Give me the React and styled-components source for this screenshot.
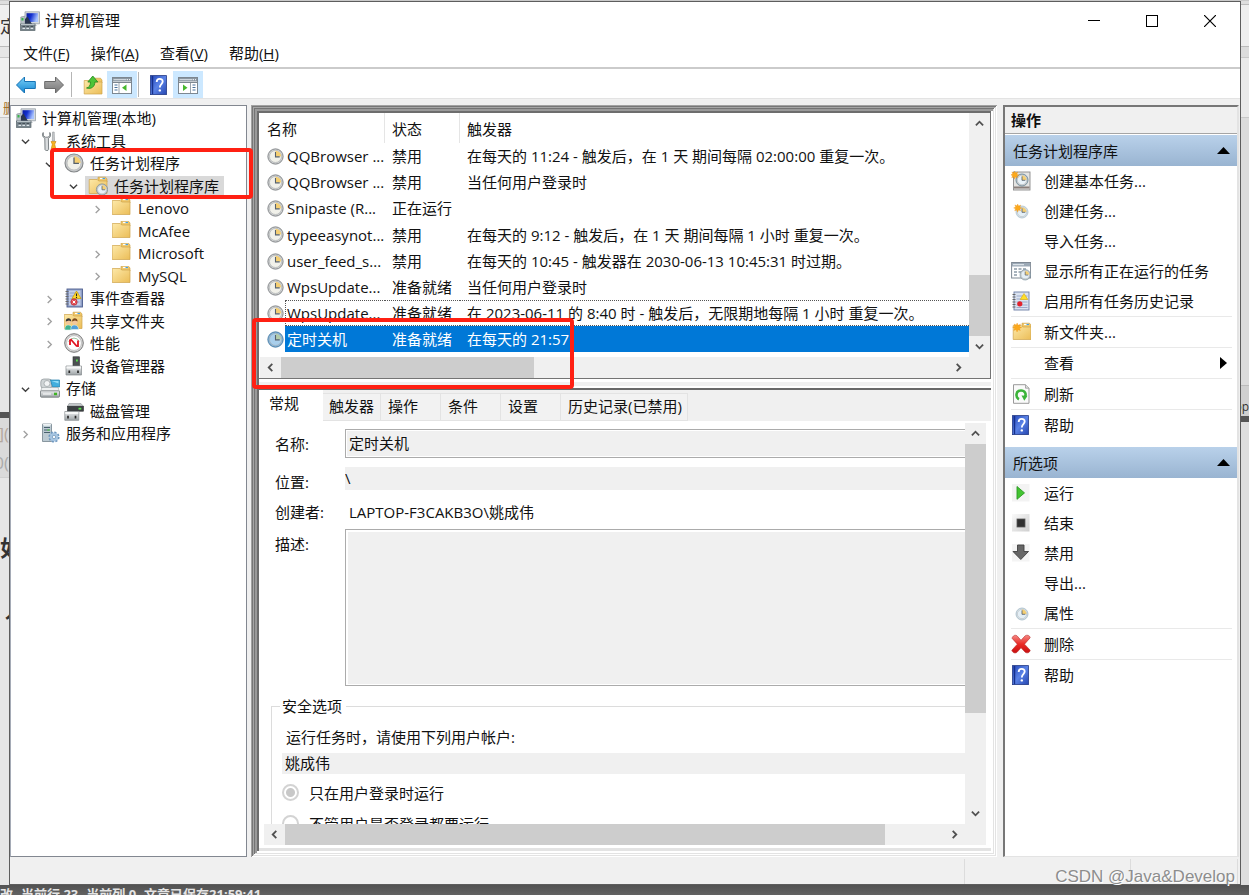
import React, { useState } from 'react';
import styled, { createGlobalStyle, css } from 'styled-components';

const GlobalStyle = createGlobalStyle`
  * {
    box-sizing: border-box;
  }

  body {
    margin: 0;
    overflow: hidden;
  }

  body, button, input, textarea {
    font-family: "Open Sans", "Noto Sans CJK SC", sans-serif;
    font-size: 15px;
    color: #111;
  }

  button {
    padding: 0;
    border: 0;
    background: none;
  }
`;

/* ---------- desktop ---------- */

const Desktop = styled.div`
  height: 100vh;
  display: grid;
  grid-template: minmax(0, 1fr) 10px / 9px minmax(0, 1fr) 8px;
  padding-top: 1px;
  background: #c9c9c9;
  overflow: hidden;
`;

const EdgeStrip = styled.div`
  display: flex;
  flex-direction: column;
  overflow: hidden;
  background: #e6e6e6;
`;

const EdgeBlock = styled.div`
  flex: ${(p) => (p.$height ? `0 0 ${p.$height}px` : '1')};
  display: flex;
  align-items: ${(p) => (p.$low ? 'flex-end' : 'center')};
  justify-content: ${(p) => (p.$start ? 'flex-start' : 'flex-end')};
  overflow: hidden;
  background: ${(p) => p.$bg || '#e6e6e6'};
  border-bottom: 1px solid ${(p) => p.$line || 'transparent'};
  padding-left: ${(p) => p.$inset || 0}px;
  color: ${(p) => p.$color || '#333'};
  font-size: ${(p) => p.$size || 15}px;
  font-weight: ${(p) => (p.$bold ? 700 : 400)};
  white-space: nowrap;
`;

const EditorStatus = styled.div`
  grid-column: 1 / -1;
  display: flex;
  gap: 8px;
  overflow: hidden;
  background: linear-gradient(#525252, #626262);
  color: #e4e4e4;
  font-size: 13px;
  font-weight: 700;
  line-height: 18px;
  white-space: nowrap;
`;

/* ---------- window ---------- */

const Window = styled.main`
  position: relative;
  display: flex;
  flex-direction: column;
  min-width: 0;
  border: 1px solid #5d5d5d;
  background: #f0f0f0;
`;

const TitleBar = styled.header`
  display: flex;
  align-items: center;
  height: 37px;
  padding: 0 1px 0 10px;
  background: #fff;
`;

const Title = styled.h1`
  flex: 1;
  margin: 0 0 2px 5px;
  font-size: 15px;
  font-weight: 400;
`;

const CaptionButton = styled.button`
  display: flex;
  align-items: center;
  justify-content: center;
  width: 58px;
  height: 37px;

  &:hover {
    background: #e5e5e5;
  }
`;

const MenuBar = styled.nav`
  display: flex;
  gap: 1px;
  height: 30px;
  padding-left: 3px;
  background: #fff;
  border-bottom: 2px solid #cbcbcb;
`;

const MenuButton = styled.button`
  padding: 0 10px;
  line-height: 28px;

  &:hover {
    background: #e5f3ff;
  }
`;

const Toolbar = styled.div`
  display: flex;
  align-items: center;
  height: 30px;
  padding: 2px 0 0 2px;
  background: #fff;
  border-bottom: 1px solid #e3e3e3;
`;

const ToolButton = styled.button`
  display: flex;
  align-items: center;
  justify-content: center;
  width: ${(p) => (p.$on ? 30 : 28)}px;
  height: 27px;
  background: ${(p) => (p.$on ? '#cce8ff' : 'transparent')};
`;

const ToolDivider = styled.span`
  width: 1px;
  height: 25px;
  margin: 0 ${(p) => p.$after}px 0 ${(p) => p.$before}px;
  background: #b5b5b5;
`;

const Panes = styled.div`
  flex: 1;
  display: grid;
  grid-template-columns: 237px minmax(0, 1fr) 236px;
  min-height: 0;
  padding: 6px 1px 0 0;
`;

const StatusBar = styled.footer`
  display: flex;
  justify-content: flex-end;
  height: 27px;
  padding: 2px 2px 0 0;
`;

const StatusCell = styled.span`
  width: ${(p) => p.$width}px;
  border-left: 1px solid #dcdcdc;
`;

const Watermark = styled.div`
  position: absolute;
  right: 5px;
  bottom: -4px;
  font-family: "Liberation Sans", sans-serif;
  font-size: 17px;
  line-height: 22px;
  color: #8d8d8d;
  text-shadow: 1px 1px #fff;
`;

const Highlight = styled.div`
  position: absolute;
  z-index: 2;
  border: 4px solid #ff2013;
  border-radius: 4px;
  pointer-events: none;
`;

const TreeHighlight = styled(Highlight)`
  top: 42px;
  left: 39px;
  right: -7px;
  height: 51px;
`;

const TaskHighlight = styled(Highlight)`
  left: -7px;
  bottom: -11px;
  width: 322px;
  height: 71px;
`;

/* ---------- tree ---------- */

const TreePane = styled.section`
  position: relative;
  border: 1px solid #828790;
  border-left-color: #a5abb6;
  background: #fff;
  padding: 1px 0;
`;

const TreeList = styled.ul`
  margin: 0;
  padding: 0;
  list-style: none;
`;

const TreeRow = styled.li`
  display: flex;
  align-items: center;
  height: 22px;
  padding-left: ${(p) => (p.$level ? 5 + (p.$level - 1) * 24 : 2)}px;

  &:nth-child(even) {
    height: 23px;
  }
`;

const Twisty = styled.button`
  width: 21px;
  height: 18px;
  padding: 2px 0 0 5px;
  display: flex;
  align-items: center;
  flex: none;
`;

const TwistyGap = styled.span`
  width: 21px;
  flex: none;
`;

const TreeLabel = styled.span`
  display: flex;
  align-items: center;
  gap: 6px;
  height: 20px;
  padding: 0 5px 0 3px;
  line-height: 20px;
  white-space: nowrap;
  background: ${(p) => (p.$selected ? '#d9d9d9' : 'transparent')};
`;

/* ---------- centre ---------- */

const Center = styled.section`
  display: flex;
  flex-direction: column;
  min-width: 0;
  min-height: 0;
  margin: 0 6px 0 4px;
  padding: 8px 6px 9px 8px;
  background: #f7f7f7;
  box-shadow:
    inset 1px 1px #a2a2a2,
    inset -1px -1px #fff,
    inset 2px 2px #777,
    inset -2px -2px #e3e3e3,
    inset 3px 3px #a6a6a6,
    inset -3px -3px #fff,
    inset 4px 4px #747474,
    inset -4px -4px #e3e3e3,
    inset 6px 6px #9a9a9a,
    inset -6px -6px #fff,
    inset 8px 8px #6d6d6d,
    inset -7px -9px #e3e3e3;
`;

const TaskPane = styled.div`
  position: relative;
  display: grid;
  grid-template: minmax(0, 1fr) 21px / minmax(0, 1fr) 21px;
  flex: 0 0 266px;
  border: solid #747474;
  border-width: 0 1px 1px 0;
  padding-left: 1px;
  background: #fff;
`;

const TaskViewport = styled.div`
  overflow: hidden;
`;

const TaskTable = styled.table`
  width: 100%;
  table-layout: fixed;
  border-collapse: separate;
  border-spacing: 0;
`;

const HeadCell = styled.th`
  height: 30px;
  padding: 0 0 0 7px;
  border-right: 1px solid ${(p) => (p.$last ? 'transparent' : '#e5e5e5')};
  font-weight: 400;
  text-align: left;
`;

const TaskRow = styled.tr`
  height: 26px;

  &:nth-child(4) {
    height: 27px;
  }
`;

const Cell = styled.td`
  padding: 0 0 0 ${(p) => (p.$kind === 'status' || p.$kind === 'trigger' ? 7 : 2)}px;
  line-height: 24px;
  white-space: nowrap;
  overflow: hidden;

  ${(p) => p.$kind === 'icon' && css`
    padding-left: 7px;

    svg {
      display: block;
    }
  `}

  ${(p) => p.$selected && p.$kind !== 'icon' && css`
    background: #0078d7;
    color: #fff;
  `}

  ${(p) => p.$focused && p.$kind !== 'icon' && css`
    border: dotted #555;
    border-width: 1px 0 1px ${p.$kind === 'name' ? 1 : 0}px;
    padding-left: ${p.$kind === 'name' ? 1 : 7}px;
  `}
`;

const Splitter = styled.div`
  flex: 0 0 11px;
  background: linear-gradient(#fff 0 3px, #f0f0f0 3px 7px, #fff 7px 9px, #696969 9px 11px);
`;

const ScrollTrack = styled.div`
  display: flex;
  flex-direction: ${(p) => (p.$vertical ? 'column' : 'row')};
  min-width: 0;
  min-height: 0;
  background: #f0f0f0;
`;

const ScrollButton = styled.button`
  flex: 0 0 21px;
  display: flex;
  align-items: center;
  justify-content: center;
`;

const ScrollRail = styled.div`
  flex: 1;
  display: flex;
  flex-direction: inherit;
  justify-content: ${(p) => (p.$end ? 'flex-end' : 'flex-start')};
`;

const ScrollThumb = styled.div`
  flex: 0 0 ${(p) => p.$size}%;
  background: #cdcdcd;
`;

const ScrollCorner = styled.div`
  background: #f0f0f0;
`;

const DetailPane = styled.div`
  flex: 1;
  display: flex;
  flex-direction: column;
  min-height: 0;
  background: #f0f0f0;
`;

const TabList = styled.div`
  display: flex;
  align-items: flex-end;
  height: 31px;
  background: #f0f0f0;
`;

const Tab = styled.button`
  height: 28px;
  min-width: 60px;
  padding: 0 5px 2px 7px;
  border: 1px solid #e3e3e3;
  border-left: 0;
  background: #f2f2f2;
  text-align: left;
  line-height: 24px;
  white-space: nowrap;

  &:nth-child(2) {
    min-width: 58px;
    padding-left: 6px;
  }

  &[aria-selected='true'] {
    height: 31px;
    min-width: 64px;
    padding: 0 0 5px 10px;
    border-color: #fff;
    background: #fff;
  }
`;

const DetailBody = styled.div`
  flex: 1;
  display: grid;
  grid-template: minmax(0, 1fr) 21px / minmax(0, 1fr) 21px;
  min-height: 0;
  padding: 2px 5px 3px 5px;
  background: #fff;
`;

const FormViewport = styled.div`
  overflow: hidden;
`;

const Form = styled.form`
  width: calc(100% + 120px);
  padding: 6px 0 0 7px;
`;

const FieldGrid = styled.div`
  display: grid;
  grid-template: 38px 30px 32px 157px / 70px minmax(0, 1fr);
  align-items: start;
  padding-left: 4px;
`;

const FieldLabel = styled.label`
  padding-top: 5px;
  line-height: 20px;
`;

const TextField = styled.input`
  width: 100%;
  height: 29px;
  padding: 0 3px 2px;
  border: 1px solid #ababab;
  outline: 0;
  background: #f0f0f0;
  box-shadow: inset 1px 1px #fff, inset -1px -1px #fff;
`;

const PlainField = styled.input`
  width: 100%;
  height: ${(p) => p.$height}px;
  padding: 0 ${(p) => p.$inset || 0}px 2px;
  border: 0;
  outline: 0;
  background: ${(p) => (p.$clear ? 'transparent' : '#f0f0f0')};
`;

const Description = styled.textarea`
  display: block;
  width: 100%;
  height: 157px;
  border: 1px solid #ababab;
  outline: 0;
  resize: none;
  background: #f0f0f0;
  box-shadow: inset 2px 2px #fff, inset -1px -1px #fff;
`;

const Security = styled.fieldset`
  margin: 10px 0 0;
  padding: 0 0 0 10px;
  border: 1px solid #dcdcdc;
`;

const Legend = styled.legend`
  margin-left: -2px;
  padding: 0 4px 0 2px;
  line-height: 20px;
`;

const AccountLabel = styled.label`
  display: block;
  padding: 11px 0 6px 4px;
  line-height: 20px;
`;

const RadioLabel = styled.label`
  display: flex;
  align-items: center;
  gap: 10px;
  height: 20px;
  margin-top: ${(p) => p.$gap}px;
`;

const Radio = styled.input`
  appearance: none;
  width: 17px;
  height: 17px;
  margin: 0;
  border: 2px solid #d3d3d3;
  border-radius: 50%;
  background: #fff;

  &:checked {
    background: radial-gradient(circle, #c8c8c8 4px, #fff 5px);
  }
`;

/* ---------- actions ---------- */

const ActionsPane = styled.aside`
  border: solid #777;
  border-width: 2px 0 0 2px;
  border-right: 2px solid #e3e3e3;
  border-bottom: 1px solid #e3e3e3;
  background: #fff;
`;

const ActionsTitle = styled.h2`
  height: 27px;
  margin: 0 0 1px;
  padding-left: 6px;
  border-bottom: 1px solid #a5a5a5;
  background: #f0f0f0;
  font-size: 15px;
  font-weight: 700;
  line-height: 27px;
`;

const GroupTitle = styled.button`
  display: flex;
  align-items: center;
  justify-content: space-between;
  width: 100%;
  height: 31px;
  padding: 0 7px 0 8px;
  background: linear-gradient(#b9d1ea, #99b4d1);
`;

const ActionList = styled.ul`
  margin: 0 0 ${(p) => (p.$spaced ? 7 : 0)}px;
  padding: 0 5px 0 6px;
  list-style: none;
`;

const ActionItem = styled.li`
  border-bottom: ${(p) => (p.$divider ? '1px solid #e9e9e9' : '0')};
`;

const ActionButton = styled.button`
  display: grid;
  grid-template-columns: 20px minmax(0, 1fr) 12px;
  column-gap: 13px;
  align-items: center;
  width: 100%;
  height: 30px;
  padding-bottom: 1px;
  text-align: left;
  white-space: nowrap;

  &:hover {
    background: #e5f3ff;
  }
`;

const ActionIcon = styled.span`
  display: flex;
  padding-top: 1px;
`;

/* ---------- icons ---------- */

const Icon = ({ size = 20, children }) => (
  <svg width={size} height={size} viewBox="0 0 20 20" aria-hidden="true">
    {children}
  </svg>
);

const HiddenDefs = styled.svg`
  position: absolute;
`;

const SharedGradients = () => (
  <HiddenDefs width="0" height="0" aria-hidden="true">
    <defs>
      <linearGradient id="gFolder" x1="0" y1="0" x2="1" y2="1">
        <stop offset="0" stopColor="#fde9a9" />
        <stop offset="1" stopColor="#ebbd57" />
      </linearGradient>
      <linearGradient id="gScreen" x1="0" y1="0" x2="1" y2="0.3">
        <stop offset="0" stopColor="#0a1a9c" />
        <stop offset="0.45" stopColor="#1330cf" />
        <stop offset="1" stopColor="#a7c2ff" />
      </linearGradient>
      <linearGradient id="gMetal" x1="0" y1="0" x2="0" y2="1">
        <stop offset="0" stopColor="#eef0f1" />
        <stop offset="1" stopColor="#9da3a6" />
      </linearGradient>
      <linearGradient id="gHelp" x1="0" y1="0" x2="1" y2="1">
        <stop offset="0" stopColor="#2447b8" />
        <stop offset="0.5" stopColor="#5a82e6" />
        <stop offset="1" stopColor="#2546b0" />
      </linearGradient>
      <linearGradient id="gBlue" x1="0" y1="0" x2="0" y2="1">
        <stop offset="0" stopColor="#79d0f8" />
        <stop offset="1" stopColor="#1486d2" />
      </linearGradient>
      <linearGradient id="gGray" x1="0" y1="0" x2="0" y2="1">
        <stop offset="0" stopColor="#b0b0b0" />
        <stop offset="1" stopColor="#767676" />
      </linearGradient>
      <linearGradient id="gRed" x1="0" y1="0" x2="0" y2="1">
        <stop offset="0" stopColor="#f58a85" />
        <stop offset="0.5" stopColor="#ea2a26" />
        <stop offset="1" stopColor="#c81010" />
      </linearGradient>
      <linearGradient id="gStop" x1="0" y1="0" x2="1" y2="1">
        <stop offset="0" stopColor="#fafafa" />
        <stop offset="1" stopColor="#cfcfcf" />
      </linearGradient>
    </defs>
  </HiddenDefs>
);

const ComputerIcon = () => (
  <Icon>
    <path d="M.8 6l5-1v9h-5z" fill="#b9c2c8" stroke="#7d878e" strokeWidth=".6" />
    <rect x="1.500" y="7" width="2" height="2.500" fill="#39b54a" />
    <path d="M5 .8h14.500v12H5z" fill="#d6dade" stroke="#8d969e" strokeWidth=".7" />
    <rect x="6.500" y="2.200" width="11.600" height="8.800" fill="url(#gScreen)" />
    <path d="M5 13V8l2.500-2.500L9.500 9l2.500 4z" fill="#2a3650" />
    <path d="M11 13h4l2 2h-4z" fill="#b5bcc2" />
    <rect x="0.500" y="13" width="14.500" height="6.500" fill="#78858d" stroke="#59656c" strokeWidth=".7" />
    <path d="M1 13.400h13.600" stroke="#c3ccd1" />
    <path d="M2.500 17.400h2.600M6.400 17.400h2.600M10.600 17.400h2.600" stroke="#dfe6ea" strokeWidth="1.400" />
    <path d="M2.500 15.600h2.600M6.400 15.600h2.600M10.600 15.600h2.600" stroke="#414b52" />
  </Icon>
);

const ToolsIcon = () => (
  <Icon>
    <path d="M3.200 1.500C1.800 3.600 2.500 6.200 4.800 7.200L5 18.500c0 1.400 3.600 1.400 3.600 0L8.400 7.300C10.800 6.200 11.200 3.500 9.800 1.500v3.300L8 6.200H5.400L3.400 4.800z" fill="#d9dcde" stroke="#6f7679" strokeWidth=".9" />
    <path d="M12.600 1h1.600l.3 9h-2.200z" fill="#c7cacc" stroke="#85898c" strokeWidth=".5" />
    <path d="M11 10.500h5l-1.300 2.700 1 4.300c.2 1.800-4.600 1.800-4.400 0l1-4.300z" fill="#f6b321" stroke="#c5830b" strokeWidth=".6" />
  </Icon>
);

const ClockFace = ({ cx = 10, cy = 10, r = 9, tint = '#f1f1ea', ring = '#85888a', rim = '#cbcdce', wedge = '#f5cf72' }) => (
  <g>
    <circle cx={cx} cy={cy} r={r} fill={rim} stroke={ring} strokeWidth={r / 8} />
    <circle cx={cx} cy={cy} r={r * 0.78} fill={tint} stroke="#a8abad" strokeWidth={r / 14} />
    <path
      d={`M${cx} ${cy}V${cy - r * 0.74}A${r * 0.74} ${r * 0.74} 0 0 1 ${cx + r * 0.74} ${cy}Z`}
      fill={wedge}
    />
    <path
      d={`M${cx} ${cy - r * 0.6}V${cy + r * 0.05}H${cx + r * 0.55}`}
      fill="none"
      stroke="#56616b"
      strokeWidth={r / 7}
    />
  </g>
);

const ClockIcon = ({ size, selected }) => (
  <Icon size={size}>
    {selected ? (
      <ClockFace tint="#a9cfec" ring="#4a7ea6" rim="#86b4d8" wedge="#b3cba9" />
    ) : (
      <ClockFace />
    )}
  </Icon>
);

const FolderShape = () => (
  <g>
    <path d="M10 3V1.200h7.500L19 3v3h-9z" fill="#f0c768" stroke="#c99b3b" strokeWidth=".6" />
    <path d="M12 2.500h5" stroke="#fff" strokeWidth="1.200" />
    <path d="M14.500 2.500h2.500" stroke="#4aa0e0" strokeWidth="1.200" />
    <path d="M1.200 3.500h8l1.500 1.500H19v12.500H1.200z" fill="url(#gFolder)" stroke="#cfa34a" strokeWidth=".7" />
  </g>
);

const FolderIcon = () => (
  <Icon>
    <g transform="translate(-1 -1)">
      <FolderShape />
    </g>
  </Icon>
);

const TaskFolderIcon = () => (
  <Icon>
    <FolderShape />
    <ClockFace cx={14} cy={13.5} r={5.6} tint="#e8f2f8" ring="#6f8794" />
  </Icon>
);

const UpFolderIcon = () => (
  <Icon>
    <path d="M10 5.500V3.200h7.500L19 5v3h-9z" fill="#f0c768" stroke="#c99b3b" strokeWidth=".6" />
    <path d="M1.200 5.500h8l1.500 1.500H19v12H1.200z" fill="url(#gFolder)" stroke="#cfa34a" strokeWidth=".7" />
    <path d="M3.500 13c2.800-.6 4-2.500 4-6H4.800L9.800 1l5 6h-2.900c0 4.500-3.400 7.500-8.400 6z" fill="#4cc438" stroke="#23891d" strokeWidth=".8" />
  </Icon>
);

const Burst = () => (
  <path d="M5.500 0l1.300 3L10 1.500 8.600 4.700l3 1.300-3 1.200L9.800 10 6.600 8.900 5.400 12 4.200 8.800 1 10l1.300-3.100L-.5 5.700l3-1.300L1.300 1.300l3 1.300z" fill="#fba91d" stroke="#ee8a0a" strokeWidth=".4" />
);

const NewFolderIcon = () => (
  <Icon>
    <g transform="translate(1 0)">
      <FolderShape />
    </g>
    <g transform="translate(2 1) scale(.75)">
      <Burst />
    </g>
  </Icon>
);

const EventIcon = () => (
  <Icon>
    <rect x="3" y="1" width="15.500" height="18" fill="#8f9fc6" stroke="#4d5d8e" strokeWidth=".9" />
    <rect x="5" y="2.500" width="11.500" height="15" fill="#c5d0ea" />
    <path d="M5.500 5h10M5.500 8h10M5.500 11h10M5.500 14h10" stroke="#7e90bd" strokeWidth=".7" />
    <path d="M1.500 3.500h3M1.500 6h3M1.500 8.500h3M1.500 11h3M1.500 13.500h3M1.500 16h3" stroke="#6b6b6b" strokeWidth="1" />
    <path d="M12.500 3l4.500 7.500H8z" fill="#ffd92b" stroke="#c99a06" strokeWidth=".7" />
    <path d="M12.500 5.500v2.700M12.500 9v1" stroke="#222" strokeWidth="1.100" />
    <circle cx="10" cy="14" r="3.200" fill="#e24d55" stroke="#b3262e" strokeWidth=".6" />
    <path d="M8.700 12.700l2.600 2.600M11.300 12.700l-2.600 2.600" stroke="#fff" />
  </Icon>
);

const SharedIcon = () => (
  <Icon>
    <g transform="translate(-1 0)">
      <FolderShape />
    </g>
    <path d="M.8 19c0-4 1.200-5 3.700-5s3.700 1.500 3.700 5z" fill="#3fb28e" stroke="#e8f5ef" strokeWidth=".6" />
    <path d="M6.800 18.500c0-3.500 1.500-4.500 3.900-4.500s3.800 1.500 3.800 4.500z" fill="#4d9fd8" stroke="#e8f5ef" strokeWidth=".6" />
    <circle cx="4.500" cy="11" r="2.800" fill="#f1c79b" />
    <path d="M1.700 10.500c0-4.200 5.600-4.200 5.600 0L5 9.500z" fill="#343434" />
    <circle cx="10.800" cy="11" r="2.800" fill="#f1c79b" />
    <path d="M8 10.500c0-4.200 5.600-4.200 5.600 0L11 9.500z" fill="#7c4a1c" />
  </Icon>
);

const PerfIcon = () => (
  <Icon>
    <circle cx="10" cy="10" r="9.300" fill="#d6d6d6" stroke="#787878" strokeWidth="1" />
    <circle cx="10" cy="10" r="7.400" fill="#fff" stroke="#a9a9a9" strokeWidth=".6" />
    <path d="M4.600 8.500a6 6 0 0 1 10.800 0" fill="none" stroke="#8ab48a" strokeWidth=".8" />
    <path d="M6.500 6l6.500 7.500M6 12V6.500M14 7.500V14" fill="none" stroke="#e01420" strokeWidth="1.800" />
  </Icon>
);

const DeviceIcon = () => (
  <Icon>
    <rect x="9" y=".8" width="6.500" height="10" fill="#4c5052" stroke="#303335" strokeWidth=".6" />
    <rect x="12" y="3.500" width="1.800" height="2" fill="#59e14b" />
    <path d="M2 10h15.500v9H2z" fill="url(#gMetal)" stroke="#84898c" strokeWidth=".7" />
    <path d="M2.500 10.500h14.500v2H2.500z" fill="#f6f7f7" />
    <path d="M5.300 14.500v2.500M14 14.500v2.500" stroke="#292929" strokeWidth="1.700" />
  </Icon>
);

const StorageIcon = () => (
  <Icon>
    <rect x=".8" y="1" width="11" height="9.500" rx="3" fill="#cfd4d6" stroke="#8b9296" strokeWidth=".7" />
    <circle cx="7" cy="5.500" r="3" fill="#f2f4f5" stroke="#979da1" strokeWidth=".7" />
    <path d="M10.500 2h9v7h-7z" fill="#42aede" stroke="#217fae" strokeWidth=".7" />
    <path d="M11.500 3h7v2.500z" fill="#92dcf6" />
    <path d="M2 9.500h16l1.500 4H.5z" fill="#eff1f2" stroke="#999fa2" strokeWidth=".6" />
    <rect x=".5" y="12.800" width="19" height="6.400" rx="1" fill="url(#gMetal)" stroke="#6d7376" strokeWidth=".8" />
    <rect x="14" y="14.700" width="3" height="2.500" fill="#3fb324" />
    <path d="M3 16h8" stroke="#fff" />
  </Icon>
);

const DiskIcon = () => (
  <Icon>
    <path d="M5 2.500h12l2.500 3H3.500z" fill="#c6cacc" stroke="#868b8e" strokeWidth=".5" />
    <rect x="3.500" y="5.200" width="16" height="5" fill="#3c4143" stroke="#2a2d2f" strokeWidth=".6" />
    <rect x="14.500" y="6.800" width="2.800" height="1.800" fill="#5ae44c" />
    <path d="M.8 10.500h14v8.800H.8z" fill="url(#gMetal)" stroke="#84898c" strokeWidth=".7" />
    <path d="M1.300 11h13v2h-13z" fill="#f6f7f7" />
    <path d="M4 14.800v2.600M11.500 14.800v2.600" stroke="#292929" strokeWidth="1.700" />
  </Icon>
);

const ServicesIcon = () => (
  <Icon>
    <path d="M2.500 1h9v17.500h-9z" fill="#bccad2" stroke="#73838d" strokeWidth=".8" />
    <path d="M2.500 1h9l-1.500 1.800H4z" fill="#eef3f5" />
    <path d="M4 4.500h6M4 7h6M4 9.500h6" stroke="#48606e" strokeWidth="1.100" />
    <rect x="7.500" y="6.400" width="2" height="1.300" fill="#55d34a" />
    <circle cx="14" cy="14" r="4.500" fill="#9dbfdf" stroke="#6e97bf" strokeWidth="2.200" strokeDasharray="2 1.500" />
    <circle cx="14" cy="14" r="4" fill="#a8c6e2" />
    <circle cx="14" cy="14" r="1.700" fill="#f4f8fc" stroke="#5e86ae" strokeWidth=".6" />
  </Icon>
);

const HelpIcon = () => (
  <Icon>
    <rect x="1.500" y=".6" width="16" height="19" fill="url(#gHelp)" stroke="#243a86" strokeWidth=".8" />
    <path d="M3.500 1v18.200" stroke="#16308c" strokeWidth="1.400" />
    <path d="M7.700 7c0-4 6-4 6-.4 0 2.500-2.900 2.600-2.900 5.800" fill="none" stroke="#fff" strokeWidth="1.800" />
    <circle cx="10.800" cy="15.400" r="1.200" fill="#fff" />
  </Icon>
);

const ArrowIcon = ({ forward }) => (
  <Icon>
    {forward ? (
      <path d="M19.500 10L11.500 2v4.500H.7v7h10.800V18z" fill="url(#gGray)" stroke="#6a6a6a" strokeWidth="1" />
    ) : (
      <path d="M.5 10l8-8v4.500h10.800v7H8.500V18z" fill="url(#gBlue)" stroke="#1673b5" strokeWidth="1" />
    )}
  </Icon>
);

const PaneIcon = ({ right }) => (
  <Icon>
    <rect x=".5" y="2.500" width="19" height="16" fill="#fff" stroke="#7d8790" />
    <path d="M1 3h18v3.500H1z" fill="#8b97a2" />
    <path d="M1.500 4.700h13" stroke="#dfe5ea" />
    <path d="M15 4.700h1M17 4.700h1" stroke="#fff" />
    <path d="M1 7.500h18" stroke="#7d8790" />
    {right ? (
      <g>
        <path d="M12.500 8v10" stroke="#9aa4ad" />
        <path d="M14.500 10h3M14.500 12.500h3M14.500 15h3" stroke="#47709b" strokeWidth="1.200" />
        <path d="M5 9.500v6.500l4.500-3.200z" fill="#46b72d" />
      </g>
    ) : (
      <g>
        <path d="M7 8v10" stroke="#9aa4ad" />
        <path d="M2.500 10h3M2.500 12.500h3M2.500 15h3" stroke="#47709b" strokeWidth="1.200" />
        <path d="M14.500 9.500v6.500L10 12.800z" fill="#46b72d" />
      </g>
    )}
  </Icon>
);

const BasicTaskIcon = () => (
  <Icon>
    <rect x="2.500" y="1" width="16.500" height="18" fill="#e4e4e2" stroke="#8b8b8b" strokeWidth=".9" />
    <path d="M3 16.500h15.500" stroke="#8a7f7a" strokeWidth="2" />
    <ClockFace cx={11} cy={9} r={6} tint="#e8f2f8" ring="#57798c" />
    <g transform="scale(.68)">
      <Burst />
    </g>
  </Icon>
);

const NewTaskIcon = () => (
  <Icon>
    <ClockFace cx={11} cy={11} r={6} tint="#e4eff6" ring="#a9bfcc" rim="#d9e4ea" />
    <g transform="translate(3 3) scale(.68)">
      <Burst />
    </g>
  </Icon>
);

const RunningIcon = () => (
  <Icon>
    <rect x=".6" y="1.500" width="19" height="15.500" fill="#fff" stroke="#7f8994" />
    <path d="M1 2h18v3.500H1z" fill="#9ca9b6" />
    <path d="M2 3.700h11" stroke="#e8edf2" />
    <path d="M3 8h3M7.500 8h3M12 8h3M3 11h3M7.500 11h3M3 14h3" stroke="#8c9aa8" strokeWidth="1.300" />
    <ClockFace cx={14.200} cy={13.800} r={5.200} tint="#e4eff6" ring="#768f9e" />
  </Icon>
);

const HistoryIcon = () => (
  <Icon>
    <rect x="3" y="1" width="15" height="18" fill="#dbe3f1" stroke="#6c7da5" strokeWidth=".9" />
    <path d="M5.500 5h11M5.500 8h11M5.500 11h11M5.500 14h11M5.500 16.500h11" stroke="#8c9cc2" strokeWidth=".8" />
    <path d="M1.500 3.500h3M1.500 6h3M1.500 8.500h3M1.500 11h3M1.500 13.500h3M1.500 16h3" stroke="#666" />
    <path d="M13 2.500l3.800 6H9.200z" fill="#ffdf29" stroke="#dba90c" strokeWidth=".6" />
    <circle cx="8.800" cy="12.800" r="2.600" fill="#e3222c" />
  </Icon>
);

const RefreshIcon = () => (
  <Icon>
    <path d="M2.500.7h12L18 4.200v15.100H2.500z" fill="#fafafa" stroke="#8f8f8f" strokeWidth=".9" />
    <path d="M14.500.7v3.500H18" fill="#ddd" stroke="#8f8f8f" strokeWidth=".7" />
    <path d="M8 15.200C4.300 13.500 4.500 6.500 10 6.500c4 0 5.500 3.500 4 6.300" fill="none" stroke="#3cb43a" strokeWidth="2.600" />
    <path d="M10.500 11.500l6 .3-3.200 5z" fill="#3cb43a" />
  </Icon>
);

const RunIcon = () => (
  <Icon>
    <rect x="1" y="1" width="17.500" height="17.500" fill="#f3f3f3" />
    <path d="M6 3.500v12.800l7.500-6.400z" fill="#43c431" stroke="#2b9a24" strokeWidth=".9" />
  </Icon>
);

const EndIcon = () => (
  <Icon>
    <rect x="1" y="1" width="17.500" height="17.500" fill="url(#gStop)" />
    <rect x="6" y="6" width="8" height="8" fill="#303030" stroke="#5a5a5a" strokeWidth=".8" />
  </Icon>
);

const DisableIcon = () => (
  <Icon>
    <rect x="1" y="1" width="17.500" height="17.500" fill="#f4f4f4" />
    <path d="M6.500 2h6.500v6.500h4.500L9.800 16.500 2 8.500h4.500z" fill="#666" stroke="#3f3f3f" strokeWidth=".9" />
  </Icon>
);

const PropertiesIcon = () => (
  <Icon>
    <ClockFace cx={11} cy={11} r={6} tint="#e4eff6" ring="#9fb6c3" rim="#d9e4ea" />
  </Icon>
);

const DeleteIcon = () => (
  <Icon>
    <path d="M1 4.200C2 1.500 4 .6 6 1.800l4 4.500 4.200-4.500c2-1.300 4.500-.5 5 1.900l-5.700 6.500 5.700 6c-.5 2.500-3 3.400-5 2L10 13.800l-4 4.500c-2 1.400-4.500.4-5.200-2l5.500-6.100z" fill="url(#gRed)" stroke="#b92a2a" strokeWidth=".6" />
  </Icon>
);

const chevronPaths = {
  up: 'M1 7l4-4 4 4',
  down: 'M1 3l4 4 4-4',
  left: 'M7 1L3 5l4 4',
  right: 'M3 1l4 4-4 4',
};

const Chevron = ({ dir, color = '#505050', weight = 2 }) => (
  <svg width="9" height="9" viewBox="0 0 10 10" aria-hidden="true">
    <path d={chevronPaths[dir]} fill="none" stroke={color} strokeWidth={weight} />
  </svg>
);

/* ---------- data ---------- */

const menus = [
  { text: '文件', key: 'F' },
  { text: '操作', key: 'A' },
  { text: '查看', key: 'V' },
  { text: '帮助', key: 'H' },
];

const tree = [
  { level: 0, label: '计算机管理(本地)', icon: <ComputerIcon /> },
  { level: 1, label: '系统工具', icon: <ToolsIcon />, open: true },
  { level: 2, label: '任务计划程序', icon: <ClockIcon />, open: true },
  { level: 3, label: '任务计划程序库', icon: <TaskFolderIcon />, open: true, selected: true },
  { level: 4, label: 'Lenovo', icon: <FolderIcon />, open: false },
  { level: 4, label: 'McAfee', icon: <FolderIcon /> },
  { level: 4, label: 'Microsoft', icon: <FolderIcon />, open: false },
  { level: 4, label: 'MySQL', icon: <FolderIcon />, open: false },
  { level: 2, label: '事件查看器', icon: <EventIcon />, open: false },
  { level: 2, label: '共享文件夹', icon: <SharedIcon />, open: false },
  { level: 2, label: '性能', icon: <PerfIcon />, open: false },
  { level: 2, label: '设备管理器', icon: <DeviceIcon /> },
  { level: 1, label: '存储', icon: <StorageIcon />, open: true },
  { level: 2, label: '磁盘管理', icon: <DiskIcon /> },
  { level: 1, label: '服务和应用程序', icon: <ServicesIcon />, open: false },
];

const tasks = [
  { name: 'QQBrowser ...', status: '禁用', trigger: '在每天的 11:24 - 触发后，在 1 天 期间每隔 02:00:00 重复一次。' },
  { name: 'QQBrowser ...', status: '禁用', trigger: '当任何用户登录时' },
  { name: 'Snipaste (R...', status: '正在运行', trigger: '' },
  { name: 'typeeasynot...', status: '禁用', trigger: '在每天的 9:12 - 触发后，在 1 天 期间每隔 1 小时 重复一次。' },
  { name: 'user_feed_s...', status: '禁用', trigger: '在每天的 10:45 - 触发器在 2030-06-13 10:45:31 时过期。' },
  { name: 'WpsUpdate...', status: '准备就绪', trigger: '当任何用户登录时' },
  { name: 'WpsUpdate...', status: '准备就绪', trigger: '在 2023-06-11 的 8:40 时 - 触发后，无限期地每隔 1 小时 重复一次。', focused: true },
  { name: '定时关机', status: '准备就绪', trigger: '在每天的 21:57', selected: true },
];

const tabs = ['常规', '触发器', '操作', '条件', '设置', '历史记录(已禁用)'];

const libraryActions = [
  { label: '创建基本任务...', icon: <BasicTaskIcon /> },
  { label: '创建任务...', icon: <NewTaskIcon /> },
  { label: '导入任务...' },
  { label: '显示所有正在运行的任务', icon: <RunningIcon /> },
  { label: '启用所有任务历史记录', icon: <HistoryIcon />, divider: true },
  { label: '新文件夹...', icon: <NewFolderIcon />, divider: true },
  { label: '查看', submenu: true, divider: true },
  { label: '刷新', icon: <RefreshIcon />, divider: true },
  { label: '帮助', icon: <HelpIcon /> },
];

const itemActions = [
  { label: '运行', icon: <RunIcon /> },
  { label: '结束', icon: <EndIcon /> },
  { label: '禁用', icon: <DisableIcon /> },
  { label: '导出...' },
  { label: '属性', icon: <PropertiesIcon />, divider: true },
  { label: '删除', icon: <DeleteIcon />, divider: true },
  { label: '帮助', icon: <HelpIcon /> },
];

/* ---------- parts ---------- */

function ScrollBar({ vertical, size, end }) {
  return (
    <ScrollTrack $vertical={vertical}>
      <ScrollButton type="button" aria-label={vertical ? '向上滚动' : '向左滚动'}>
        <Chevron dir={vertical ? 'up' : 'left'} />
      </ScrollButton>
      <ScrollRail $end={end}>
        <ScrollThumb $size={size} />
      </ScrollRail>
      <ScrollButton type="button" aria-label={vertical ? '向下滚动' : '向右滚动'}>
        <Chevron dir={vertical ? 'down' : 'right'} />
      </ScrollButton>
    </ScrollTrack>
  );
}

function Tree() {
  return (
    <TreePane>
      <TreeList>
        {tree.map((node) => (
          <TreeRow key={node.label} $level={node.level}>
            {node.level > 0 && node.open === undefined && <TwistyGap />}
            {node.open !== undefined && (
              <Twisty type="button" aria-expanded={node.open} aria-label={node.label}>
                <Chevron
                  dir={node.open ? 'down' : 'right'}
                  color={node.open ? '#404040' : '#a0a0a0'}
                  weight={1.5}
                />
              </Twisty>
            )}
            <TreeLabel $selected={node.selected}>
              {node.icon}
              {node.label}
            </TreeLabel>
          </TreeRow>
        ))}
      </TreeList>
      <TreeHighlight />
    </TreePane>
  );
}

function TaskList() {
  return (
    <TaskPane>
      <TaskViewport>
        <TaskTable>
          <colgroup>
            <col width="25" />
            <col width="100" />
            <col width="75" />
            <col />
          </colgroup>
          <thead>
            <tr>
              <HeadCell colSpan={2}>名称</HeadCell>
              <HeadCell>状态</HeadCell>
              <HeadCell $last>触发器</HeadCell>
            </tr>
          </thead>
          <tbody>
            {tasks.map((task, i) => {
              const state = { $selected: task.selected, $focused: task.focused };
              return (
                <TaskRow key={i}>
                  <Cell $kind="icon" {...state}>
                    <ClockIcon size={17} selected={task.selected} />
                  </Cell>
                  <Cell $kind="name" {...state}>{task.name}</Cell>
                  <Cell $kind="status" {...state}>{task.status}</Cell>
                  <Cell $kind="trigger" {...state}>{task.trigger}</Cell>
                </TaskRow>
              );
            })}
          </tbody>
        </TaskTable>
      </TaskViewport>
      <ScrollBar vertical size={30} end />
      <ScrollBar size={38} />
      <ScrollCorner />
      <TaskHighlight />
    </TaskPane>
  );
}

function TaskDetails() {
  const [active, setActive] = useState(0);

  return (
    <DetailPane>
      <TabList role="tablist">
        {tabs.map((tab, i) => (
          <Tab key={tab} type="button" role="tab" aria-selected={i === active} onClick={() => setActive(i)}>
            {tab}
          </Tab>
        ))}
      </TabList>
      <DetailBody>
        <FormViewport>
          <Form>
            <FieldGrid>
              <FieldLabel htmlFor="task-name">名称:</FieldLabel>
              <TextField id="task-name" readOnly value="定时关机" />
              <FieldLabel htmlFor="task-path">位置:</FieldLabel>
              <PlainField id="task-path" readOnly value="\" $height={23} />
              <FieldLabel htmlFor="task-author">创建者:</FieldLabel>
              <PlainField id="task-author" readOnly value="LAPTOP-F3CAKB3O\姚成伟" $height={30} $inset={4} $clear />
              <FieldLabel htmlFor="task-description">描述:</FieldLabel>
              <Description id="task-description" readOnly value="" />
            </FieldGrid>
            <Security>
              <Legend>安全选项</Legend>
              <AccountLabel htmlFor="task-account">运行任务时，请使用下列用户帐户:</AccountLabel>
              <PlainField id="task-account" readOnly value="姚成伟" $height={21} $inset={3} />
              <RadioLabel $gap={8}>
                <Radio type="radio" name="logon" defaultChecked />
                只在用户登录时运行
              </RadioLabel>
              <RadioLabel $gap={11}>
                <Radio type="radio" name="logon" />
                不管用户是否登录都要运行
              </RadioLabel>
            </Security>
          </Form>
        </FormViewport>
        <ScrollBar vertical size={75} />
        <ScrollBar size={91} />
        <ScrollCorner />
      </DetailBody>
    </DetailPane>
  );
}

function ActionGroup({ title, items, spaced }) {
  return (
    <>
      <GroupTitle type="button" aria-expanded="true">
        {title}
        <svg width="13" height="7" viewBox="0 0 13 7" aria-hidden="true">
          <path d="M0 7l6.500-7L13 7z" fill="#000" />
        </svg>
      </GroupTitle>
      <ActionList $spaced={spaced}>
        {items.map((item) => (
          <ActionItem key={item.label} $divider={item.divider}>
            <ActionButton type="button">
              <ActionIcon>{item.icon}</ActionIcon>
              {item.label}
              {item.submenu && (
                <svg width="7" height="12" viewBox="0 0 7 12" aria-hidden="true">
                  <path d="M0 0l7 6-7 6z" fill="#000" />
                </svg>
              )}
            </ActionButton>
          </ActionItem>
        ))}
      </ActionList>
    </>
  );
}

function App() {
  return (
    <Desktop>
      <GlobalStyle />
      <SharedGradients />

      <EdgeStrip>
        <EdgeBlock $height={4} $bg="#dedede" $line="#bbb" />
        <EdgeBlock $height={42} $bg="#efefef" $line="#bbb" $size={17} $start>定</EdgeBlock>
        <EdgeBlock $height={11} $line="#c8c8c8" />
        <EdgeBlock $height={60} $bg="#f0f0f0" $line="#c8c8c8" $color="#a5722b" $size={13} $inset={3} $low $start>删</EdgeBlock>
        <EdgeBlock $height={294} />
        <EdgeBlock $height={6} $bg="#555" />
        <EdgeBlock $height={30} $bg="#dadada" $color="#b3a79d" $size={17}>注](</EdgeBlock>
        <EdgeBlock $height={30} $bg="#dadada" $color="#aaa" $size={17} $line="#d0d0d0">50(</EdgeBlock>
        <EdgeBlock $height={136} $size={22} $bold $start>如</EdgeBlock>
        <EdgeBlock $height={14} $size={20} $inset={5} $bold $low $start>君</EdgeBlock>
        <EdgeBlock />
      </EdgeStrip>

      <Window>
        <TitleBar>
          <ComputerIcon />
          <Title>计算机管理</Title>
          <CaptionButton type="button" aria-label="最小化">
            <svg width="12" height="12" viewBox="0 0 12 12"><path d="M0 5.500h12" stroke="#000" /></svg>
          </CaptionButton>
          <CaptionButton type="button" aria-label="最大化">
            <svg width="12" height="12" viewBox="0 0 12 12"><rect x=".5" y=".5" width="11" height="11" fill="none" stroke="#000" /></svg>
          </CaptionButton>
          <CaptionButton type="button" aria-label="关闭">
            <svg width="12" height="12" viewBox="0 0 12 12"><path d="M0 0l12 12M12 0L0 12" stroke="#000" strokeWidth="1.200" /></svg>
          </CaptionButton>
        </TitleBar>

        <MenuBar>
          {menus.map((menu) => (
            <MenuButton key={menu.key} type="button">
              {menu.text}(<u>{menu.key}</u>)
            </MenuButton>
          ))}
        </MenuBar>

        <Toolbar>
          <ToolButton type="button" aria-label="后退"><ArrowIcon /></ToolButton>
          <ToolButton type="button" aria-label="前进"><ArrowIcon forward /></ToolButton>
          <ToolDivider $before={3} $after={7} />
          <ToolButton type="button" aria-label="向上"><UpFolderIcon /></ToolButton>
          <ToolButton type="button" $on aria-label="控制台树"><PaneIcon /></ToolButton>
          <ToolDivider $before={1} $after={6} />
          <ToolButton type="button" aria-label="帮助"><HelpIcon /></ToolButton>
          <ToolButton type="button" $on aria-label="操作窗格"><PaneIcon right /></ToolButton>
        </Toolbar>

        <Panes>
          <Tree />
          <Center>
            <TaskList />
            <Splitter />
            <TaskDetails />
          </Center>
          <ActionsPane>
            <ActionsTitle>操作</ActionsTitle>
            <ActionGroup title="任务计划程序库" items={libraryActions} spaced />
            <ActionGroup title="所选项" items={itemActions} />
          </ActionsPane>
        </Panes>

        <StatusBar>
          <StatusCell $width={166} />
          <StatusCell $width={107} />
          <StatusCell $width={1} />
        </StatusBar>
        <Watermark>CSDN @Java&amp;Develop</Watermark>
      </Window>

      <EdgeStrip>
        <EdgeBlock $height={4} $bg="#dedede" $line="#bbb" />
        <EdgeBlock $height={42} $bg="#eee" $line="#bbb" />
        <EdgeBlock $height={11} $bg="#dcdcdc" $line="#c8c8c8" />
        <EdgeBlock $height={60} $bg="#e9e9e9" $line="#c8c8c8" />
        <EdgeBlock $height={268} $bg="#dcdcdc" $line="#bbb" />
        <EdgeBlock $height={30} $bg="#d0d0d0" $size={12} $low>op</EdgeBlock>
        <EdgeBlock $height={6} $bg="#555" />
        <EdgeBlock $bg="#dedede" />
      </EdgeStrip>

      <EditorStatus>
        <span>改</span>
        <span>当前行 23</span>
        <span>当前列 0</span>
        <span>文章已保存21:59:41</span>
      </EditorStatus>
    </Desktop>
  );
}

export default App;
